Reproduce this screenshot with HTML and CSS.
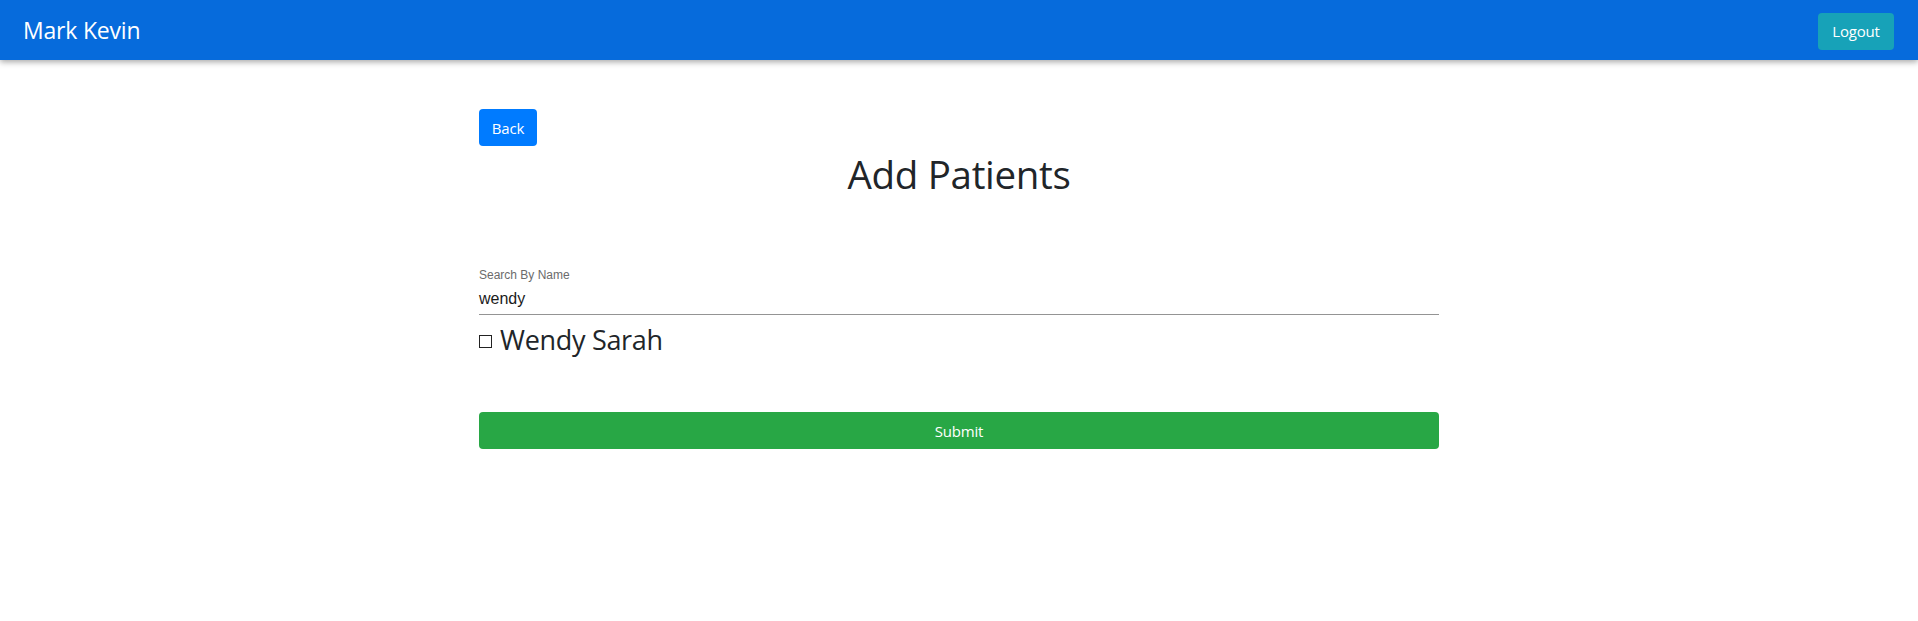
FILE: index.html
```html
<!DOCTYPE html>
<html>
<head>
<meta charset="utf-8">
<link rel="stylesheet" href="styles.css">
</head>
<body>
<nav class="navbar">
  <span class="brand">Mark Kevin</span>
  <button class="btn btn-info">Logout</button>
</nav>
<main class="container">
  <div class="back-row"><button class="btn btn-primary">Back</button></div>
  <h1 class="title">Add Patients</h1>
  <div class="field">
    <label class="field-label">Search By Name</label>
    <div class="field-input">wendy</div>
  </div>
  <div class="result">
    <span class="box"></span>
    <span class="result-name">Wendy Sarah</span>
  </div>
  <button class="btn btn-success btn-block">Submit</button>
</main>
</body>
</html>
```

FILE: styles.css
```css
* { box-sizing: border-box; }
body {
  margin: 0;
  font-family: "Open Sans", "Noto Sans", sans-serif;
  color: #212529;
  background: #fff;
}
.navbar {
  height: 60px;
  background: #066bdc;
  display: flex;
  align-items: center;
  justify-content: space-between;
  padding: 0 24px 0 23px;
  box-shadow: 0 2px 6px rgba(0,0,0,0.35);
}
.brand {
  color: #fff;
  font-size: 23px;
  line-height: 1;
  letter-spacing: -0.2px;
}
.btn {
  font-family: "Open Sans", "Noto Sans", sans-serif;
  border: none;
  border-radius: 4px;
  color: #fff;
  font-size: 15px;
  height: 37px;
  padding: 0 12px;
  cursor: pointer;
  letter-spacing: -0.2px;
}
.btn-info { background: #17a2b8; width: 76px; margin-top: 2px; }
.btn-primary { background: #007bff; width: 58px; }
.btn-success { background: #28a745; }
.btn-block { display: block; width: 100%; }
.container {
  width: 960px;
  margin: 0 auto;
  padding-top: 49px;
}
.back-row { display: flex; }
.title {
  margin: 0;
  text-align: center;
  font-weight: 400;
  font-size: 38.5px;
  line-height: 48px;
  margin-top: 4px;
  letter-spacing: -0.3px;
}
.field {
  margin-top: 70px;
  border-bottom: 1px solid #949494;
  padding-bottom: 5px;
}
.field-label {
  display: block;
  font-family: "Liberation Sans", Arial, sans-serif;
  font-size: 12px;
  color: #6b6b6b;
  line-height: 14px;
}
.field-input {
  font-family: "Liberation Sans", Arial, sans-serif;
  font-size: 16px;
  line-height: 20px;
  margin-top: 7px;
  color: #1a1a1a;
}
.result {
  display: flex;
  align-items: center;
  margin-top: 6px;
  height: 36px;
}
.box {
  width: 13px;
  height: 13px;
  border: 1px solid #222;
  margin-top: 5px;
  margin-right: 8px;
}
.result-name {
  font-size: 27px;
  letter-spacing: -0.3px;
}
.btn-success { margin-top: 55px; }
```
